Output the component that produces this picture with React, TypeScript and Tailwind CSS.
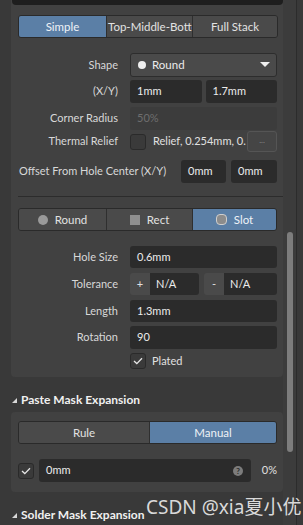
import React from 'react';

const font = { fontFamily: 'Lato, "Noto Sans CJK SC", sans-serif' };

function Segmented({ items, active, cols }: { items: { label: string; icon?: React.ReactNode; clip?: boolean }[]; active: number; cols: string }) {
  return (
    <div className={`grid ${cols} h-[23px] rounded-[3px] border border-[#2a2a2a] overflow-hidden`}>
      {items.map((it, i) => (
        <div
          key={i}
          className={`flex items-center min-w-0 h-full overflow-hidden whitespace-nowrap text-[11.5px] ${
            it.clip ? 'justify-start pl-px' : 'justify-center gap-[7px]'
          } ${i === active ? 'bg-[#5b7fa6] text-[#eef2f6]' : 'bg-[#4a4a4a] text-[#e2e2e2]'} ${
            i > 0 ? 'border-l border-[#2f2f2f]' : ''
          }`}
        >
          {it.icon}
          <span>{it.label}</span>
        </div>
      ))}
    </div>
  );
}

function Row({ label, children, h = 'h-[23px]', mt }: { label: string; children: React.ReactNode; h?: string; mt: string }) {
  return (
    <div className={`flex items-center ${h} ${mt}`}>
      <div className="w-[100px] shrink-0 text-right text-[11px] text-[#d8d8d8] whitespace-nowrap">{label}</div>
      <div className="ml-[12px] flex-1 min-w-0 flex h-full gap-[4px] mr-[6px]">{children}</div>
    </div>
  );
}

function Input({ value, className = '' }: { value: string; className?: string }) {
  return (
    <div className={`flex-1 min-w-0 h-full rounded-[3px] bg-[#2b2b2b] flex items-center pl-[7px] text-[11px] text-[#ececec] ${className}`}>
      {value}
    </div>
  );
}

function Check({ checked }: { checked?: boolean }) {
  return (
    <div className="w-[16px] h-[16px] rounded-[3px] border border-[#2a2a2a] bg-[#3a3a3a] flex items-center justify-center shrink-0">
      {checked && (
        <svg width="10" height="8" viewBox="0 0 10 8">
          <polyline points="1,4 3.8,6.6 9,1.2" fill="none" stroke="#e6e6e6" strokeWidth="1.3" />
        </svg>
      )}
    </div>
  );
}

function Header({ label, mt }: { label: string; mt: string }) {
  return (
    <div className={`flex items-center h-[16px] ${mt} pl-[12px]`}>
      <svg width="5" height="5" viewBox="0 0 5 5" className="mr-[4px]">
        <polygon points="0,5 5,5 5,0" fill="#d8d8d8" />
      </svg>
      <span className="text-[12px] font-bold text-[#f0f0f0]">{label}</span>
    </div>
  );
}

export default function App() {
  return (
    <div className="w-[303px] h-[525px] overflow-hidden bg-[#393939] flex relative" style={font}>
      <div className="flex-1 min-w-0 flex flex-col">
        {/* via panel */}
        <div className="ml-[11px] bg-[#414141] rounded-b-[4px] pb-[8px]">
          <div className="ml-px h-[5px] bg-[#1e1e1e] rounded-b-[4px]" />
          <div className="ml-[7px] mr-[5px] mt-[10px]">
            <Segmented
              cols="grid-cols-[87px_86px_1fr]"
              active={0}
              items={[{ label: 'Simple' }, { label: 'Top-Middle-Bottom', clip: true }, { label: 'Full Stack' }]}
            />
          </div>
          <div className="ml-[7px]">
            <Row label="Shape" mt="mt-[15px]" h="h-[24px]">
              <div className="flex-1 h-full rounded-[3px] bg-[#4a4a4a] border border-[#2d2d2d] flex items-center pl-[7px] pr-[6px] text-[11.5px] text-[#ececec]">
                <span className="w-[8px] h-[8px] rounded-full bg-[#efefef] mr-[6px]" />
                <span className="flex-1">Round</span>
                <svg width="10" height="6" viewBox="0 0 10 6">
                  <polygon points="0,0 10,0 5,5" fill="#f0f0f0" />
                </svg>
              </div>
            </Row>
            <Row label="(X/Y)" mt="mt-[3px]">
              <Input value="1mm" />
              <Input value="1.7mm" />
            </Row>
            <Row label="Corner Radius" mt="mt-[4px]">
              <div className="flex-1 h-full rounded-[3px] bg-[#3c3c3c] flex items-center pl-[7px] text-[11px] text-[#6e6e6e]">50%</div>
            </Row>
            <Row label="Thermal Relief" mt="mt-px" h="h-[21px]">
              <div className="flex-1 min-w-0 flex items-center h-full">
                <Check />
                <span className="ml-[7px] flex-1 min-w-0 whitespace-nowrap text-[11px] text-[#e0e0e0]">Relief, 0.254mm, 0.</span>
                <div className="w-[30px] h-[21px] shrink-0 rounded-[3px] bg-[#454545] border border-[#555] flex items-center justify-center text-[8px] text-[#8a8a8a] pb-[4px]">...</div>
              </div>
            </Row>
            <div className="flex items-center h-[23px] mt-[8px]">
              <div className="flex-1 min-w-0 pl-px text-[11px] text-[#d8d8d8] whitespace-nowrap">Offset From Hole Center (X/Y)</div>
              <div className="flex h-full gap-[5px] mr-[6px] shrink-0">
                <Input value="0mm" className="w-[45px] flex-none" />
                <Input value="0mm" className="w-[46px] flex-none" />
              </div>
            </div>
            <div className="mt-[13px] h-px bg-[#2c2c2c]" />
            <div className="mt-[11px] mr-[6px]">
              <Segmented
                cols="grid-cols-[87px_86px_1fr]"
                active={2}
                items={[
                  { label: 'Round', icon: <span className="w-[10px] h-[10px] rounded-full bg-[#9a9a9a]" /> },
                  { label: 'Rect', icon: <span className="w-[10px] h-[10px] bg-[#8f8f8f]" /> },
                  { label: 'Slot', icon: <span className="w-[11px] h-[11px] rounded-[4px] bg-[#8c8c8c] border border-[#cfcfcf]" /> },
                ]}
              />
            </div>
            <Row label="Hole Size" mt="mt-[15px]" h="h-[22px]">
              <Input value="0.6mm" />
            </Row>
            <Row label="Tolerance" mt="mt-[5px]" h="h-[22px]">
              <div className="flex-1 flex h-full rounded-[3px] overflow-hidden">
                <div className="w-[20px] bg-[#4a4a4a] flex items-center justify-center text-[11px] text-[#e0e0e0]">+</div>
                <div className="flex-1 bg-[#2b2b2b] flex items-center pl-[6px] text-[11px] text-[#ececec]">N/A</div>
              </div>
              <div className="w-[73px] shrink-0 flex h-full rounded-[3px] overflow-hidden ml-px">
                <div className="w-[20px] bg-[#4a4a4a] flex items-center justify-center text-[11px] text-[#e0e0e0]">-</div>
                <div className="flex-1 bg-[#2b2b2b] flex items-center pl-[6px] text-[11px] text-[#ececec]">N/A</div>
              </div>
            </Row>
            <Row label="Length" mt="mt-[5px]" h="h-[22px]">
              <Input value="1.3mm" />
            </Row>
            <Row label="Rotation" mt="mt-[4px]">
              <Input value="90" />
            </Row>
            <div className="flex items-center h-[16px] mt-[4px] pl-[112px]">
              <Check checked />
              <span className="ml-[6px] text-[11px] text-[#e0e0e0]">Plated</span>
            </div>
          </div>
        </div>

        <Header label="Paste Mask Expansion" mt="mt-[15px]" />

        <div className="ml-[11px] mt-[4px] bg-[#414141] rounded-[4px] pt-[9px] pb-[10px] pl-[7px] pr-[6px]">
          <Segmented cols="grid-cols-[130px_1fr]" active={1} items={[{ label: 'Rule' }, { label: 'Manual' }]} />
          <div className="flex items-center h-[23px] mt-[15px]">
            <Check checked />
            <div className="ml-[5px] w-[212px] shrink-0 h-full rounded-[3px] bg-[#2b2b2b] flex items-center pl-[7px] pr-[8px] text-[11px] text-[#ececec]">
              <span className="flex-1">0mm</span>
              <span className="w-[10px] h-[10px] rounded-full bg-[#7c7c7c] flex items-center justify-center text-[8px] font-bold text-[#2b2b2b] leading-none">?</span>
            </div>
            <span className="flex-1 text-right text-[11px] text-[#e0e0e0]">0%</span>
          </div>
        </div>

        <Header label="Solder Mask Expansion" mt="mt-[15px]" />
      </div>

      {/* scrollbar */}
      <div className="w-[13px] shrink-0 bg-[#3c3c3c] relative">
        <div className="absolute left-[4px] top-[232px] w-[6px] h-[220px] rounded-full bg-[#7d7d7d]" />
      </div>
      <div className="w-px shrink-0 bg-[#2c2c2c]" />
      <div className="w-[6px] shrink-0 bg-[#393939]" />

      <div className="absolute left-[146px] top-[493px] text-[19px] text-[#d9d9d9] whitespace-nowrap" style={{ fontFamily: '"Noto Sans", "Noto Sans CJK SC", sans-serif' }}>
        CSDN @xia夏小优
      </div>
    </div>
  );
}
